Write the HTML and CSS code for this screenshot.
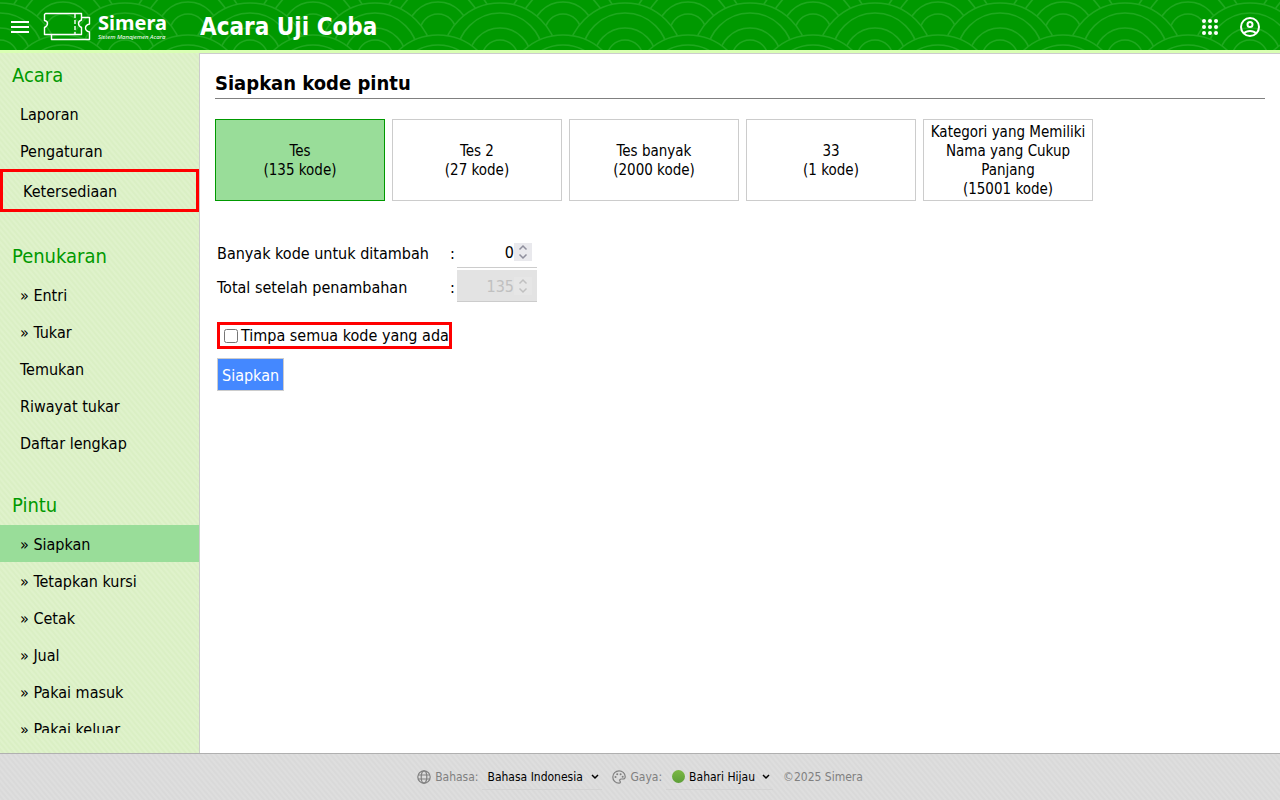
FILE: index.html
```html
<!DOCTYPE html>
<html lang="id">
<head>
<meta charset="utf-8">
<title>Siapkan kode pintu - Simera</title>
<link rel="stylesheet" href="styles.css">
</head>
<body>
<header class="topbar">
  <svg class="waves" aria-hidden="true">
    <defs>
      <g id="scale">
        <circle cy="58" r="58"/><circle cy="53" r="43"/><circle cy="56" r="31"/><circle cy="55" r="18"/>
      </g>
      <pattern id="seigaiha" width="125" height="50" patternUnits="userSpaceOnUse">
        <g fill="#009900" stroke="#1fa81f" stroke-width="1.6">
          <use href="#scale" x="0" y="-54"/><use href="#scale" x="125" y="-54"/>
          <use href="#scale" x="-62" y="-23"/><use href="#scale" x="63" y="-23"/><use href="#scale" x="188" y="-23"/>
          <use href="#scale" x="0" y="3"/><use href="#scale" x="125" y="3"/>
          <use href="#scale" x="-62" y="35"/><use href="#scale" x="63" y="35"/><use href="#scale" x="188" y="35"/>
        </g>
      </pattern>
    </defs>
    <rect width="100%" height="100%" fill="url(#seigaiha)"/>
  </svg>
  <div class="brand">
    <button class="icon-btn" type="button" aria-label="Menu">
      <svg width="24" height="24" viewBox="0 0 24 24"><path fill="#fff" d="M3 18h18v-2H3v2zm0-5h18v-2H3v2zm0-7v2h18V6H3z"/></svg>
    </button>
    <a class="logo" href="#">
      <svg width="48" height="30" viewBox="0 0 48 30" fill="none" stroke="#fff" stroke-width="1.4" stroke-linejoin="round">
        <path d="M2.500 1.500H38.500V8Q35.500 9 35.500 11.500T38.500 15.500V22.500H1.500V15.500Q4.500 14 4.500 11.500T1.500 8.500V2.500Z"/>
        <path d="M38.500 5.500H46.500V12Q42.500 13 42.500 16T46.500 20V27.500H8.500V23"/>
        <path d="M32 2V22" stroke-dasharray="4 2"/>
      </svg>
      <span class="logo-text"><strong>Simera</strong><em>Sistem Manajemen Acara</em></span>
    </a>
  </div>
  <div class="event-name">Acara Uji Coba</div>
  <nav class="tools" aria-label="Akun">
    <button class="icon-btn" type="button" aria-label="Aplikasi">
      <svg width="24" height="24" viewBox="0 0 24 24" fill="#fff"><circle cx="6" cy="6" r="2"/><circle cx="12" cy="6" r="2"/><circle cx="18" cy="6" r="2"/><circle cx="6" cy="12" r="2"/><circle cx="12" cy="12" r="2"/><circle cx="18" cy="12" r="2"/><circle cx="6" cy="18" r="2"/><circle cx="12" cy="18" r="2"/><circle cx="18" cy="18" r="2"/></svg>
    </button>
    <button class="icon-btn" type="button" aria-label="Profil">
      <svg width="24" height="24" viewBox="0 0 24 24" fill="none" stroke="#fff" stroke-width="2"><circle cx="12" cy="12" r="9"/><circle cx="12" cy="9.500" r="2.500"/><path d="M6 18.500Q8 16 12 16T18 18.500"/></svg>
    </button>
  </nav>
</header>
<div class="body">
  <aside class="sidebar">
    <nav class="menu" aria-label="Menu acara">
      <section class="group">
        <h2>Acara</h2>
        <a href="#">Laporan</a>
        <a href="#">Pengaturan</a>
        <a class="marked" href="#">Ketersediaan</a>
      </section>
      <section class="group">
        <h2>Penukaran</h2>
        <a href="#">» Entri</a>
        <a href="#">» Tukar</a>
        <a href="#">Temukan</a>
        <a href="#">Riwayat tukar</a>
        <a href="#">Daftar lengkap</a>
      </section>
      <section class="group">
        <h2>Pintu</h2>
        <a class="active" href="#">» Siapkan</a>
        <a href="#">» Tetapkan kursi</a>
        <a href="#">» Cetak</a>
        <a href="#">» Jual</a>
        <a href="#">» Pakai masuk</a>
        <a href="#">» Pakai keluar</a>
      </section>
    </nav>
  </aside>
  <main class="content">
    <h1>Siapkan kode pintu</h1>
    <div class="cards">
      <button class="card selected" type="button">Tes<br>(135 kode)</button>
      <button class="card" type="button">Tes 2<br>(27 kode)</button>
      <button class="card" type="button">Tes banyak<br>(2000 kode)</button>
      <button class="card" type="button">33<br>(1 kode)</button>
      <button class="card" type="button">Kategori yang Memiliki Nama yang Cukup Panjang<br>(15001 kode)</button>
    </div>
    <form class="form">
      <div class="fields">
        <label for="add">Banyak kode untuk ditambah</label><span>:</span>
        <div class="number">
          <input id="add" type="number" value="0">
          <svg class="spin" width="18" height="18" viewBox="0 0 18 18"><path d="M5.500 6.500L9 3L12.500 6.500M5.500 11.500L9 15L12.500 11.500"/></svg>
        </div>
        <label for="total">Total setelah penambahan</label><span>:</span>
        <div class="number">
          <input id="total" type="number" value="135" disabled>
          <svg class="spin" width="18" height="18" viewBox="0 0 18 18"><path d="M5.500 6.500L9 3L12.500 6.500M5.500 11.500L9 15L12.500 11.500"/></svg>
        </div>
      </div>
      <label class="overwrite"><input type="checkbox">Timpa semua kode yang ada</label>
      <button class="submit" type="button">Siapkan</button>
    </form>
  </main>
</div>
<footer class="footer">
  <div class="choice">
    <svg width="14" height="14" viewBox="0 0 14 14" fill="none" stroke="#808080" stroke-width="1.200"><circle cx="7" cy="7" r="6.200"/><ellipse cx="7" cy="7" rx="2.800" ry="6.200"/><path d="M1 5H13M1 9H13"/></svg>
    <label for="lang">Bahasa:</label>
    <div class="select lang">
      <select id="lang"><option>Bahasa Indonesia</option></select>
      <svg class="arrow" width="8" height="6" viewBox="0 0 8 6"><path d="M1 1L4 4L7 1"/></svg>
    </div>
  </div>
  <div class="choice">
    <svg width="14" height="14" viewBox="0 0 14 14"><path d="M7 .800A6.200 6.200 0 1 0 7 13.200C8.500 13.200 8.600 12 8 11.200C7.200 10 8 9 9.200 9H11C12.500 9 13.300 8 13.200 6.500C13 3.200 10.300 .800 7 .800Z" fill="none" stroke="#808080" stroke-width="1.200"/><g fill="#808080"><circle cx="3.500" cy="7" r="1"/><circle cx="5.200" cy="4.200" r="1"/><circle cx="8.600" cy="4.200" r="1"/><circle cx="10.700" cy="6.700" r="1"/></g></svg>
    <label for="theme">Gaya:</label>
    <div class="select theme">
      <i class="dot"></i>
      <select id="theme"><option>Bahari Hijau</option></select>
      <svg class="arrow" width="8" height="6" viewBox="0 0 8 6"><path d="M1 1L4 4L7 1"/></svg>
    </div>
  </div>
  <span>©2025 Simera</span>
</footer>
</body>
</html>
```

FILE: styles.css
```css
* { box-sizing: border-box; }

body {
  margin: 0;
  height: 100vh;
  display: flex;
  flex-direction: column;
  overflow: hidden;
  background: #fff;
  color: #000;
  font: 16px/20px "DejaVu Sans Condensed", Tahoma, sans-serif;
}

button, input, select { font: inherit; color: inherit; }
a { color: inherit; text-decoration: none; }

.topbar {
  position: relative;
  flex: none;
  height: 53px;
  padding-top: 3px;
  display: flex;
  align-items: center;
  background: #090;
  border-bottom: 3px solid #d9ffb3;
  color: #fff;
}
.waves { position: absolute; inset: 0; width: 100%; height: 100%; }
.brand { position: relative; width: 200px; display: flex; align-items: center; }
.icon-btn {
  width: 40px;
  height: 40px;
  padding: 0;
  border: 0;
  background: none;
  display: flex;
  align-items: center;
  justify-content: center;
}
.logo { display: flex; align-items: center; gap: 7px; padding-left: 3px; }
.logo-text { display: flex; flex-direction: column; font-family: "Noto Sans", sans-serif; }
.logo-text strong { font-size: 20px; line-height: 20px; }
.logo-text em { font-size: 6px; line-height: 8px; }
.event-name { position: relative; flex: 1; font-size: 24px; line-height: 30px; font-weight: bold; }
.tools { position: relative; display: flex; padding-right: 10px; }

.body { flex: 1; min-height: 0; display: flex; }

.sidebar {
  width: 200px;
  flex: none;
  padding: 2px 0 20px;
  border-right: 1px solid #ccc;
  background: repeating-linear-gradient(50deg, #dff2cb 0 1px, #daefc4 2px 3px, #dff2cb 4px);
}
.menu { height: 100%; overflow: hidden; display: flex; flex-direction: column; gap: 24px; }
.group { flex: none; }
.group h2 {
  margin: 0;
  padding: 0 12px;
  color: #090;
  font-size: 20px;
  line-height: 40px;
  font-weight: normal;
}
.group a { display: block; padding: 2px 20px 0; line-height: 35px; }
.group .active { background: #99dd99; }
.group .marked { border: 3px solid #f00; }

.content { flex: 1; min-width: 0; padding: 16px 15px; border-top: 1px solid #ccc; }
.content h1 {
  margin: 0 0 20px;
  padding-bottom: 2px;
  border-bottom: 1px solid #808080;
  font-size: 20px;
  line-height: 26px;
}
.cards { display: flex; flex-wrap: wrap; gap: 7px; }
.card {
  width: 170px;
  height: 82px;
  padding: 3px 6px 1px;
  border: 1px solid #ccc;
  background: #fff;
  font-size: 15px;
  line-height: 19px;
}
.card.selected { background: #99dd99; border-color: #090; }

.form { padding: 35px 2px 0; display: flex; flex-direction: column; align-items: flex-start; }
.fields {
  display: grid;
  grid-template-columns: 231px 5px 80px;
  column-gap: 2px;
  row-gap: 2px;
  align-items: center;
}
.fields label, .fields span { padding-top: 3px; }
.number { position: relative; }
.number input {
  display: block;
  width: 100%;
  height: 32px;
  padding: 2px 23px 0 4px;
  border: 0;
  border-bottom: 1px solid #ccc;
  background: #fff;
  text-align: right;
  appearance: textfield;
}
.number input::-webkit-inner-spin-button { display: none; }
.number input:disabled { background: #e3e3e3; color: #c0c0c0; }
.spin { position: absolute; top: 7px; right: 5px; background: #e9e9ed; fill: none; stroke: #8f8f9d; stroke-width: 1.5; }
.number input:disabled + .spin { background: #e6e6e6; stroke: #c0c0c0; }

.overwrite {
  margin-top: 20px;
  display: flex;
  align-items: center;
  height: 27px;
  border: 3px solid #f00;
}
.overwrite input { width: 14px; height: 14px; margin: 0 3px 0 4px; }
.submit {
  margin-top: 9px;
  height: 33px;
  padding: 2px 4px 0;
  border: 1px solid #ccc;
  background: #48f;
  color: #fff;
}

.footer {
  flex: none;
  height: 47px;
  display: flex;
  align-items: center;
  justify-content: center;
  gap: 10px;
  border-top: 1px solid #b0b0b0;
  background: repeating-linear-gradient(50deg, #dedede 0 1px, #d9d9d9 2px 3px, #dedede 4px);
  color: #808080;
  font-size: 12px;
  line-height: 16px;
}
.choice { display: flex; align-items: center; gap: 4px; }
.select { position: relative; display: flex; align-items: center; height: 26px; padding-left: 5px; color: #000; border-bottom: 1px solid #d3d3d3; }
.lang { width: 120px; }
.theme { width: 107px; gap: 4px; padding-left: 6px; }
.select select { flex: 1; min-width: 0; padding: 0; border: 0; background: none; appearance: none; }
.arrow { position: absolute; right: 3px; top: 10px; fill: none; stroke: #000; stroke-width: 1.5; }
.dot { width: 13px; height: 13px; border-radius: 50%; background: linear-gradient(#7cb844, #5c9e38); }
```
